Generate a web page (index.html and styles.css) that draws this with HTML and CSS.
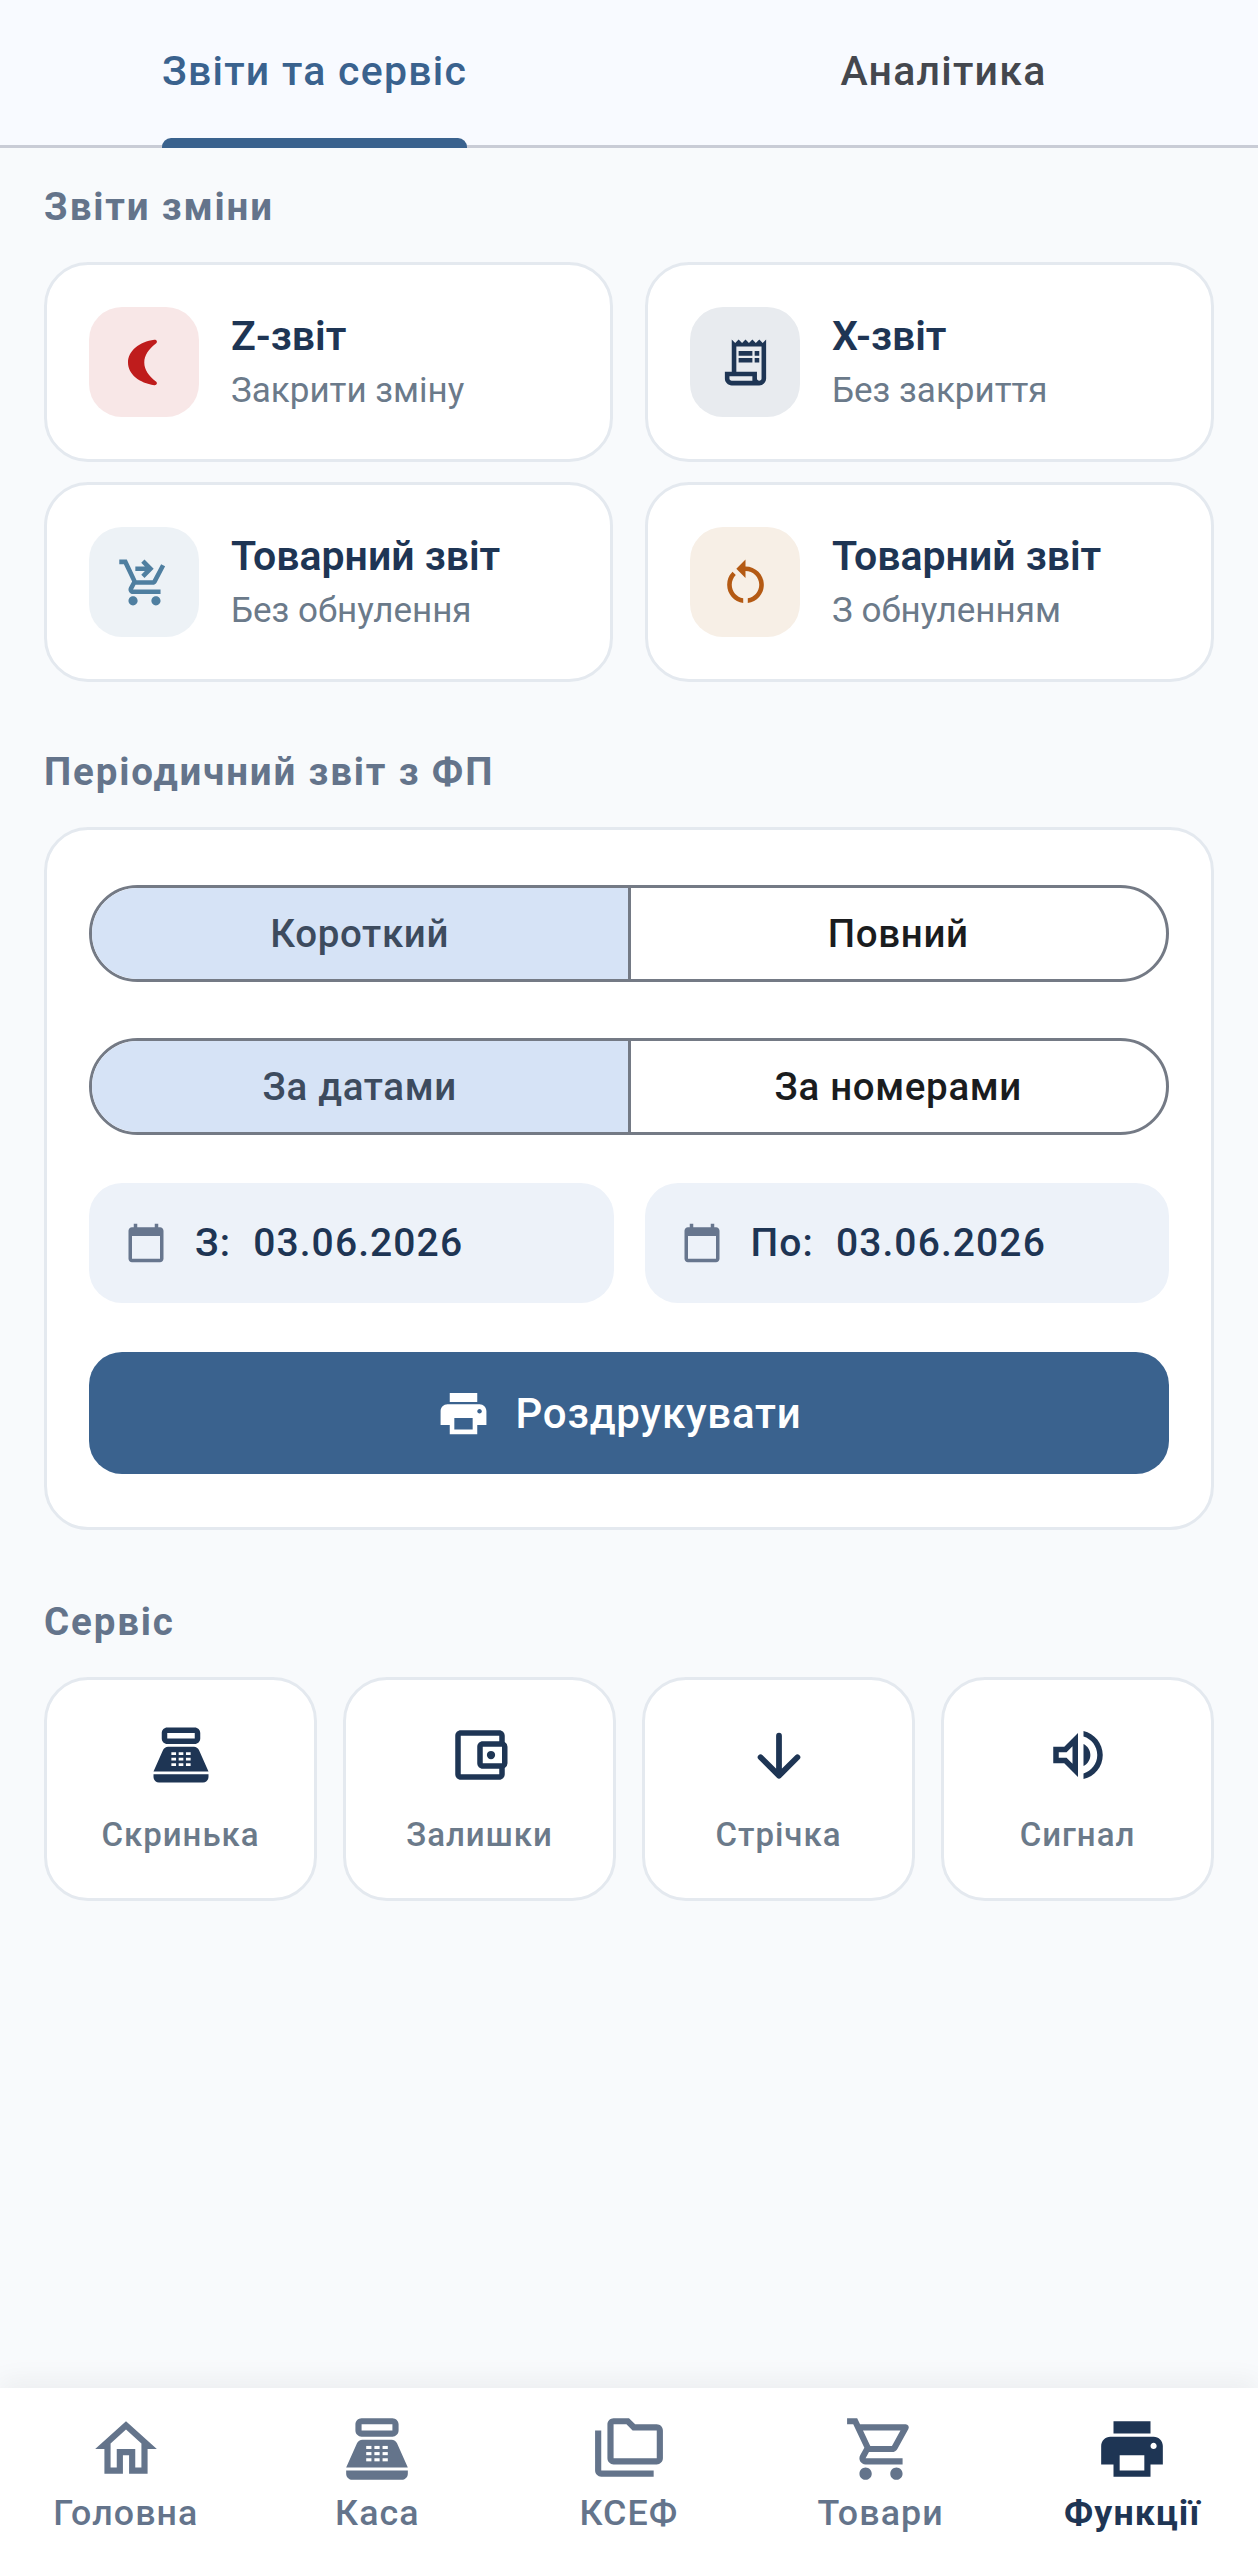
FILE: index.html
```html
<!DOCTYPE html>
<html lang="uk">

<head>
  <meta charset="UTF-8">
  <meta name="viewport" content="width=device-width, initial-scale=1.0">
  <title>Функції</title>
  <link rel="stylesheet" href="styles.css">
</head>

<body>
  <div class="tabs">
    <div class="tab active"><span class="tab-label">Звіти та сервіс</span></div>
    <div class="tab"><span class="tab-label">Аналітика</span></div>
  </div>

  <main class="content">
    <h2 class="section-title">Звіти зміни</h2>
    <div class="report-grid">
      <div class="report-card">
        <div class="report-icon bg-red">
          <svg class="icon-md red" viewBox="0 0 24 24"><path d="M16.300 2.100C9.800 3 4.800 6.900 4.800 12s5 9 11.500 9.900c1.100.1 1.500-1 .7-1.600C13.900 18 11.900 15.200 11.900 12s2-6 5.100-8.300c.8-.6.4-1.700-.7-1.600z"/></svg>
        </div>
        <div class="report-text">
          <div class="report-title">Z-звіт</div>
          <div class="report-sub">Закрити зміну</div>
        </div>
      </div>
      <div class="report-card">
        <div class="report-icon bg-grey">
          <svg class="icon-md navy" viewBox="0 0 24 24"><path d="M19.500 3.500 18 2l-1.500 1.500L15 2l-1.500 1.500L12 2l-1.500 1.500L9 2 7.500 3.500 6 2v14H3v3c0 1.660 1.340 3 3 3h12c1.660 0 3-1.340 3-3V2l-1.500 1.500zM15 20H6c-.55 0-1-.45-1-1v-1h10v2zm4-1c0 .55-.45 1-1 1s-1-.45-1-1v-3H8V5h11v14z"/><path d="M9 7h6v2H9zM16 7h2v2h-2zM9 10h6v2H9zM16 10h2v2h-2z"/></svg>
        </div>
        <div class="report-text">
          <div class="report-title">X-звіт</div>
          <div class="report-sub">Без закриття</div>
        </div>
      </div>
      <div class="report-card">
        <div class="report-icon bg-blue">
          <svg class="icon-md steel" viewBox="0 0 24 24"><path d="M7 18c-1.100 0-1.990.9-1.990 2S5.900 22 7 22s2-.9 2-2-.9-2-2-2zM17 18c-1.100 0-1.990.9-1.990 2s.89 2 1.990 2 2-.9 2-2-.9-2-2-2zM8.100 13h7.450c.75 0 1.410-.41 1.750-1.030L21 4.960 19.250 4l-3.700 7H8.530L4.270 2H1v2h2l3.600 7.590-1.350 2.440C4.520 15.370 5.480 17 7 17h12v-2H7l1.100-2zM12 2l4 4-4 4-1.410-1.410L12.170 7H8V5h4.170l-1.590-1.590L12 2z"/></svg>
        </div>
        <div class="report-text">
          <div class="report-title">Товарний звіт</div>
          <div class="report-sub">Без обнулення</div>
        </div>
      </div>
      <div class="report-card">
        <div class="report-icon bg-orange">
          <svg class="icon-md orange" viewBox="0 0 24 24"><path d="M12 5V2L8 6l4 4V7c3.310 0 6 2.690 6 6 0 2.970-2.170 5.430-5 5.910v2.020c3.950-.49 7-3.850 7-7.930 0-4.420-3.580-8-8-8zm-6 8c0-1.650.67-3.150 1.760-4.240L6.340 7.340A7.960 7.960 0 0 0 4 13c0 4.080 3.050 7.440 7 7.930v-2.020c-2.830-.48-5-2.940-5-5.910z"/></svg>
        </div>
        <div class="report-text">
          <div class="report-title">Товарний звіт</div>
          <div class="report-sub">З обнуленням</div>
        </div>
      </div>
    </div>

    <h2 class="section-title gap-periodic">Періодичний звіт з ФП</h2>
    <div class="panel">
      <div class="segment">
        <div class="segment-item selected">Короткий</div>
        <div class="segment-item">Повний</div>
      </div>
      <div class="segment">
        <div class="segment-item selected">За датами</div>
        <div class="segment-item">За номерами</div>
      </div>
      <div class="date-row">
        <div class="date-field">
          <svg class="icon-date" viewBox="0 0 24 24"><path d="M20 3h-1V1h-2v2H7V1H5v2H4c-1.100 0-2 .9-2 2v16c0 1.100.9 2 2 2h16c1.100 0 2-.9 2-2V5c0-1.100-.9-2-2-2zm0 18H4V8h16v13z"/></svg>
          <span>З:</span>
          <span>03.06.2026</span>
        </div>
        <div class="date-field">
          <svg class="icon-date" viewBox="0 0 24 24"><path d="M20 3h-1V1h-2v2H7V1H5v2H4c-1.100 0-2 .9-2 2v16c0 1.100.9 2 2 2h16c1.100 0 2-.9 2-2V5c0-1.100-.9-2-2-2zm0 18H4V8h16v13z"/></svg>
          <span>По:</span>
          <span>03.06.2026</span>
        </div>
      </div>
      <div class="print-button">
        <svg class="icon-md white" viewBox="0 0 24 24"><path d="M19 8H5c-1.660 0-3 1.340-3 3v6h4v4h12v-4h4v-6c0-1.660-1.340-3-3-3zm-3 11H8v-5h8v5zm3-7c-.55 0-1-.45-1-1s.45-1 1-1 1 .45 1 1-.45 1-1 1zm-1-9H6v4h12V3z"/></svg>
        <span>Роздрукувати</span>
      </div>
    </div>

    <h2 class="section-title gap-service">Сервіс</h2>
    <div class="service-grid">
      <div class="service-card">
        <svg class="icon-lg navy" viewBox="0 0 24 24"><path d="M17 2H7c-1.100 0-2 .9-2 2v2c0 1.100.9 2 2 2h10c1.100 0 2-.9 2-2V4c0-1.100-.9-2-2-2zm0 4H7V4h10v2zM20 22H4c-1.100 0-2-.9-2-2v-1h20v1c0 1.100-.9 2-2 2zM18.530 10.190C18.210 9.470 17.490 9 16.700 9H7.300c-.79 0-1.510.47-1.830 1.190L2 18h20l-3.470-7.810z"/><g class="keys"><rect x="8.500" y="11" width="1.700" height="1"/><rect x="11.150" y="11" width="1.700" height="1"/><rect x="13.800" y="11" width="1.700" height="1"/><rect x="8.500" y="13" width="1.700" height="1"/><rect x="11.150" y="13" width="1.700" height="1"/><rect x="13.800" y="13" width="1.700" height="1"/><rect x="8.500" y="15" width="1.700" height="1"/><rect x="11.150" y="15" width="1.700" height="1"/><rect x="13.800" y="15" width="1.700" height="1"/></g></svg>
        <div class="service-label">Скринька</div>
      </div>
      <div class="service-card">
        <svg class="icon-lg navy" viewBox="0 0 24 24"><path d="M21 7.280V5c0-1.100-.9-2-2-2H5c-1.110 0-2 .9-2 2v14c0 1.100.89 2 2 2h14c1.100 0 2-.9 2-2v-2.280A2 2 0 0 0 22 15V9a2 2 0 0 0-1-1.720zM20 9v6h-7V9h7zM5 19V5h14v2h-6c-1.100 0-2 .9-2 2v6c0 1.100.9 2 2 2h6v2H5z"/><circle cx="16" cy="12" r="1.500"/></svg>
        <div class="service-label">Залишки</div>
      </div>
      <div class="service-card">
        <svg class="icon-lg" viewBox="0 0 24 24"><path class="arrow-line" d="M12 5v14.200M5.300 12.800 12 19.500l6.700-6.700"/></svg>
        <div class="service-label">Стрічка</div>
      </div>
      <div class="service-card">
        <svg class="icon-lg navy" viewBox="0 0 24 24"><path d="M3 9v6h4l5 5V4L7 9H3zm7-.17v6.340L7.830 13H5v-2h2.830L10 8.830zM14 7.970v8.050c1.480-.73 2.500-2.250 2.500-4.020 0-1.770-1.020-3.290-2.500-4.030zm0-4.740v2.060c2.890.86 5 3.540 5 6.710s-2.110 5.850-5 6.710v2.060c4.010-.91 7-4.490 7-8.770 0-4.280-2.990-7.860-7-8.770z"/></svg>
        <div class="service-label">Сигнал</div>
      </div>
    </div>
  </main>

  <nav class="bottom-nav">
    <div class="nav-item">
      <svg class="icon-nav" viewBox="0 0 24 24"><path d="m12 5.690 5 4.500V18h-2v-6H9v6H7v-7.810l5-4.500M12 3 2 12h3v8h6v-6h2v6h6v-8h3L12 3z"/></svg>
      <span>Головна</span>
    </div>
    <div class="nav-item">
      <svg class="icon-nav" viewBox="0 0 24 24"><path d="M17 2H7c-1.100 0-2 .9-2 2v2c0 1.100.9 2 2 2h10c1.100 0 2-.9 2-2V4c0-1.100-.9-2-2-2zm0 4H7V4h10v2zM20 22H4c-1.100 0-2-.9-2-2v-1h20v1c0 1.100-.9 2-2 2zM18.530 10.190C18.210 9.470 17.490 9 16.700 9H7.300c-.79 0-1.510.47-1.830 1.190L2 18h20l-3.470-7.810z"/><g class="keys"><rect x="8.500" y="11" width="1.700" height="1"/><rect x="11.150" y="11" width="1.700" height="1"/><rect x="13.800" y="11" width="1.700" height="1"/><rect x="8.500" y="13" width="1.700" height="1"/><rect x="11.150" y="13" width="1.700" height="1"/><rect x="13.800" y="13" width="1.700" height="1"/><rect x="8.500" y="15" width="1.700" height="1"/><rect x="11.150" y="15" width="1.700" height="1"/><rect x="13.800" y="15" width="1.700" height="1"/></g></svg>
      <span>Каса</span>
    </div>
    <div class="nav-item">
      <svg class="icon-nav" viewBox="0 0 24 24"><path d="M3 19h17v2H3c-1.100 0-2-.9-2-2V6h2v13zM23 6v9c0 1.100-.9 2-2 2H7c-1.100 0-2-.9-2-2V4c0-1.100.9-2 2-2h5l2 2h7c1.100 0 2 .9 2 2zM7 15h14V6h-7.830l-2-2H7v11z"/></svg>
      <span>КСЕФ</span>
    </div>
    <div class="nav-item">
      <svg class="icon-nav" viewBox="0 0 24 24"><path d="M15.550 13c.75 0 1.410-.41 1.750-1.030l3.580-6.490A.996.996 0 0 0 20.010 4H5.210l-.94-2H1v2h2l3.600 7.590-1.350 2.440C4.520 15.370 5.480 17 7 17h12v-2H7l1.100-2h7.450zM6.160 6h12.150l-2.760 5H8.530L6.160 6zM7 18c-1.100 0-1.990.9-1.990 2S5.900 22 7 22s2-.9 2-2-.9-2-2-2zm10 0c-1.100 0-1.990.9-1.990 2s.89 2 1.990 2 2-.9 2-2-.9-2-2-2z"/></svg>
      <span>Товари</span>
    </div>
    <div class="nav-item current">
      <svg class="icon-nav" viewBox="0 0 24 24"><path d="M19 8H5c-1.660 0-3 1.340-3 3v6h4v4h12v-4h4v-6c0-1.660-1.340-3-3-3zm-3 11H8v-5h8v5zm3-7c-.55 0-1-.45-1-1s.45-1 1-1 1 .45 1 1-.45 1-1 1zm-1-9H6v4h12V3z"/></svg>
      <span>Функції</span>
    </div>
  </nav>
</body>

</html>
```
FILE: styles.css
```css
* {
  box-sizing: border-box;
}

body {
  display: flex;
  flex-direction: column;
  height: 2560px;
  margin: 0;
  overflow: hidden;
  font-family: Roboto, "Noto Sans", sans-serif;
  background-color: #f8fafc;
}

/* tabs */
.tabs {
  display: flex;
  height: 148px;
  border-bottom: 3px solid #c9ccd6;
  background-color: #f8faff;
}

.tab {
  display: flex;
  flex: 1;
  justify-content: center;
  align-items: center;
  padding-bottom: 3px;
  font-size: 41px;
  font-weight: 500;
  letter-spacing: 1.25px;
  color: #44474e;
}

.tab-label {
  position: relative;
  display: block;
  line-height: 145px;
}

.tab.active {
  color: #3a628e;
}

.tab.active .tab-label::after {
  content: "";
  position: absolute;
  left: 0;
  right: 0;
  bottom: -4px;
  height: 10px;
  border-radius: 9px 9px 0 0;
  background-color: #3a628e;
}

/* page */
.content {
  flex: 1;
  padding: 34px 44px 0;
}

.section-title {
  margin: 0 0 30px;
  font-size: 38.5px;
  font-weight: 700;
  line-height: 50px;
  letter-spacing: 1.85px;
  color: #64748b;
}

.gap-periodic {
  margin-top: 65px;
}

.gap-service {
  margin-top: 67px;
}

.report-grid {
  display: grid;
  grid-template-columns: 1fr 1fr;
  gap: 20px 32px;
}

.report-card {
  display: flex;
  align-items: center;
  gap: 32px;
  height: 200px;
  padding: 0 42px;
  border: 3px solid #e4e9ef;
  border-radius: 44px;
  background-color: #fff;
}

.report-icon {
  display: flex;
  flex-shrink: 0;
  justify-content: center;
  align-items: center;
  width: 110px;
  height: 110px;
  border-radius: 33px;
}

.bg-red {
  background-color: #f8e7e7;
}

.bg-grey {
  background-color: #e8ebef;
}

.bg-blue {
  background-color: #edf2f6;
}

.bg-orange {
  background-color: #f7efe6;
}

.icon-md {
  width: 55px;
  height: 55px;
}

.icon-lg {
  width: 66px;
  height: 66px;
}

.red {
  fill: #bf1c1c;
}

.navy {
  fill: #1e3554;
}

.steel {
  fill: #4f7fa0;
}

.orange {
  fill: #b45a14;
}

.white {
  fill: #fff;
}

.keys {
  fill: #fff;
}

.report-text {
  padding-top: 3px;
}

.report-title {
  font-size: 41px;
  font-weight: 600;
  line-height: 52px;
  color: #1e3554;
}

.report-sub {
  margin-top: 3px;
  font-size: 35px;
  line-height: 52px;
  color: #6b7a8a;
}

/* periodic report */
.panel {
  display: flex;
  flex-direction: column;
  height: 703px;
  padding: 55px 42px 0;
  border: 3px solid #e4e9ef;
  border-radius: 44px;
  background-color: #fff;
}

.segment {
  display: flex;
  flex-shrink: 0;
  height: 97px;
  margin-bottom: 56px;
  border: 3px solid #747a85;
  border-radius: 49px;
  overflow: hidden;
  background-color: #fff;
}

.segment-item {
  display: flex;
  flex: 1;
  justify-content: center;
  align-items: center;
  font-size: 38.5px;
  font-weight: 500;
  letter-spacing: 0.65px;
  color: #1a1c1e;
}

.segment-item.selected {
  border-right: 3px solid #747a85;
  color: #3d4b5e;
  background-color: #d6e3f6;
}

.date-row {
  display: grid;
  grid-template-columns: 1fr 1fr;
  gap: 31px;
  margin-top: -8px;
}

.date-field {
  display: flex;
  align-items: center;
  height: 120px;
  padding-left: 36px;
  border-radius: 33px;
  font-size: 39px;
  font-weight: 500;
  letter-spacing: 1.1px;
  color: #1e3554;
  background-color: #edf2f9;
}

.date-field span {
  margin-left: 22px;
}

.icon-date {
  width: 42px;
  height: 42px;
  margin-right: 6px;
  fill: #67768e;
}

.print-button {
  display: flex;
  justify-content: center;
  align-items: center;
  gap: 24px;
  height: 122px;
  margin-top: 49px;
  padding-right: 20px;
  border-radius: 33px;
  font-size: 42px;
  font-weight: 500;
  letter-spacing: 0.8px;
  color: #fff;
  background-color: #3a628e;
}

/* service */
.service-grid {
  display: grid;
  grid-template-columns: repeat(4, 1fr);
  gap: 26px;
}

.service-card {
  display: flex;
  flex-direction: column;
  align-items: center;
  height: 224px;
  padding-top: 42px;
  border: 3px solid #e4e9ef;
  border-radius: 44px;
  background-color: #fff;
}

.service-label {
  margin-top: 25px;
  font-size: 33px;
  font-weight: 500;
  line-height: 44px;
  letter-spacing: 1px;
  color: #6b7a8a;
}

.arrow-line {
  fill: none;
  stroke: #1e3554;
  stroke-width: 2.1;
  stroke-linecap: round;
  stroke-linejoin: round;
}

/* bottom nav */
.bottom-nav {
  display: flex;
  height: 172px;
  background-color: #fff;
  box-shadow: 0 -8px 24px rgba(0, 0, 0, 0.05);
}

.nav-item {
  display: flex;
  flex: 1;
  flex-direction: column;
  align-items: center;
  padding-top: 24px;
  font-size: 35.75px;
  font-weight: 500;
  line-height: 44px;
  letter-spacing: 1.1px;
  color: #64748b;
}

.icon-nav {
  width: 74px;
  height: 74px;
  margin-bottom: 5px;
  fill: currentColor;
}

.nav-item.current {
  font-weight: 700;
  color: #1e3554;
}
```
